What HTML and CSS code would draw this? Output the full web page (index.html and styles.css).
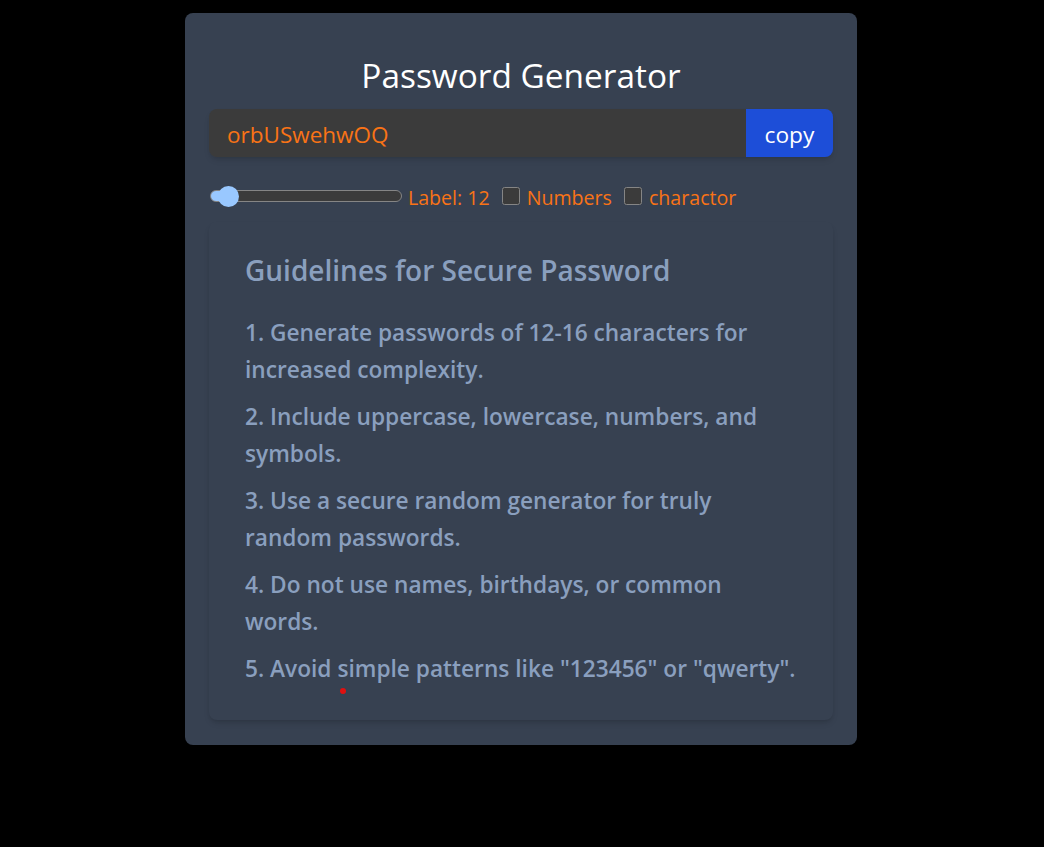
FILE: index.html
```html
<!DOCTYPE html>
<html lang="en">
<head>
<meta charset="utf-8">
<title>Password Generator</title>
<link rel="stylesheet" href="styles.css">
</head>
<body>
<div class="card">
  <h1 class="title">Password Generator</h1>
  <div class="pw-row">
    <input class="pw-input" type="text" value="orbUSwehwOQ" readonly>
    <button class="copy-btn">copy</button>
  </div>
  <div class="controls">
    <input class="range" type="range" min="8" max="100" value="12">
    <label class="ctl-label">Label: 12</label>
    <input class="check" type="checkbox" id="num">
    <label class="ctl-label" for="num">Numbers</label>
    <input class="check" type="checkbox" id="chr">
    <label class="ctl-label" for="chr">charactor</label>
  </div>
  <div class="guide">
    <h2 class="guide-title">Guidelines for Secure Password</h2>
    <p class="guide-item">1. Generate passwords of 12-16 characters for<br>increased complexity.</p>
    <p class="guide-item">2. Include uppercase, lowercase, numbers, and<br>symbols.</p>
    <p class="guide-item">3. Use a secure random generator for truly<br>random passwords.</p>
    <p class="guide-item">4. Do not use names, birthdays, or common<br>words.</p>
    <p class="guide-item">5. Avoid simple patterns like "123456" or "qwerty".</p>
    <span class="cursor-dot"></span>
  </div>
</div>
</body>
</html>
```
FILE: styles.css
```css
html, body {
  margin: 0;
  padding: 0;
  background: #000;
  font-family: "Open Sans", "Noto Sans", sans-serif;
  color-scheme: dark;
}
.card {
  width: 672px;
  box-sizing: border-box;
  margin: 13px 0 0 185px;
  background: #374151;
  border-radius: 8px;
  padding: 38px 24px 25px;
}
.title {
  margin: 0 0 10px;
  text-align: center;
  color: #fff;
  font-weight: 400;
  font-size: 33.4px;
  line-height: 48px;
}
.pw-row {
  display: flex;
  height: 48px;
  border-radius: 8px;
  overflow: hidden;
  box-shadow: 0 4px 6px -1px rgba(0,0,0,.1), 0 2px 4px -2px rgba(0,0,0,.1);
}
.pw-input {
  flex: 1;
  min-width: 0;
  border: 0;
  outline: 0;
  background: #3b3b3b;
  color: #f97316;
  font-family: inherit;
  font-size: 22.5px;
  padding: 3px 18px 0;
}
.copy-btn {
  width: 87px;
  border: 0;
  background: #1d4ed8;
  color: #fff;
  font-family: inherit;
  font-size: 22.7px;
  padding: 2px 0 0;
}
.controls {
  display: flex;
  align-items: center;
  margin-top: 27px;
  height: 24px;
}
.range {
  -webkit-appearance: none;
  appearance: none;
  width: 192px;
  height: 12px;
  margin: 0 6px 0 1px;
  border: 1px solid #858585;
  border-radius: 6px;
  box-sizing: border-box;
  background: linear-gradient(to right, #99c8ff 0 16px, #3b3b3b 16px);
}
.range::-webkit-slider-thumb {
  -webkit-appearance: none;
  appearance: none;
  width: 21px;
  height: 21px;
  border-radius: 50%;
  background: #99c8ff;
  border: 0;
}
.check {
  width: 18px;
  height: 18px;
  margin: 0 7px 0 12px;
}
.ctl-label {
  color: #f97316;
  font-size: 19.6px;
  padding-top: 2px;
}
.guide {
  position: relative;
  margin-top: 14px;
  border-radius: 8px;
  padding: 28px 20px 33px 36px;
  box-shadow: 0 4px 6px -1px rgba(0,0,0,.12), 0 2px 4px -2px rgba(0,0,0,.12);
}
.guide-title {
  margin: 0 0 24px;
  color: #8a9fbe;
  font-size: 28px;
  font-weight: 600;
  line-height: 40px;
}
.guide-item {
  margin: 0 0 10px;
  color: #8a9fbe;
  font-size: 22.7px;
  font-weight: 600;
  line-height: 37px;
  white-space: nowrap;
}
.guide-item:last-of-type { margin-bottom: 0; }
.cursor-dot {
  position: absolute;
  left: 131px;
  top: 466px;
  width: 6px;
  height: 6px;
  border-radius: 50%;
  background: #e01010;
}
```
